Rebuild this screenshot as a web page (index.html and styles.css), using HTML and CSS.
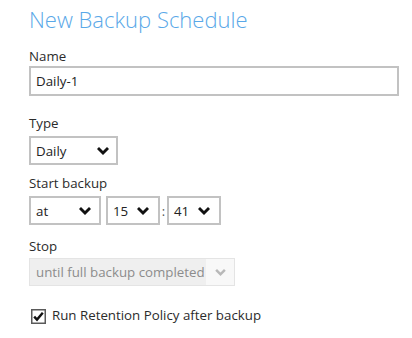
FILE: index.html
```html
<!DOCTYPE html>
<html>
<head>
<meta charset="utf-8">
<link rel="stylesheet" href="styles.css">
</head>
<body>
<div class="form">
  <h1 class="title">New Backup Schedule</h1>

  <div class="label label-name">Name</div>
  <div class="input">Daily-1</div>

  <div class="label label-type">Type</div>
  <div class="row">
    <div class="select sel-type"><span>Daily</span>
      <svg class="chev" width="12" height="8" viewBox="0 0 12 8"><path d="M0 2 L2 0 L6 4 L10 0 L12 2 L6 8 Z"/></svg>
    </div>
  </div>

  <div class="label label-start">Start backup</div>
  <div class="row time-row">
    <div class="select sel-at"><span>at</span>
      <svg class="chev" width="12" height="8" viewBox="0 0 12 8"><path d="M0 2 L2 0 L6 4 L10 0 L12 2 L6 8 Z"/></svg>
    </div>
    <div class="select sel-num"><span>15</span>
      <svg class="chev" width="12" height="8" viewBox="0 0 12 8"><path d="M0 2 L2 0 L6 4 L10 0 L12 2 L6 8 Z"/></svg>
    </div>
    <span class="colon">:</span>
    <div class="select sel-num"><span>41</span>
      <svg class="chev" width="12" height="8" viewBox="0 0 12 8"><path d="M0 2 L2 0 L6 4 L10 0 L12 2 L6 8 Z"/></svg>
    </div>
  </div>

  <div class="label label-stop">Stop</div>
  <div class="row">
    <div class="select-disabled">
      <span class="dis-text">until full backup completed</span>
      <span class="dis-arrow">
        <svg width="11" height="7" viewBox="0 0 12 8"><path d="M0 2 L2 0 L6 4 L10 0 L12 2 L6 8 Z"/></svg>
      </span>
    </div>
  </div>

  <div class="check-row">
    <svg class="checkbox" width="15" height="15" viewBox="0 0 15 15">
      <rect x="0.75" y="0.75" width="13.5" height="13.5" fill="#fff" stroke="#5a5a5a" stroke-width="1.5"/>
      <path d="M3.2 7.6 L6 10.6 L11.8 3.8" fill="none" stroke="#111" stroke-width="2.4"/>
    </svg>
    <span class="check-text">Run Retention Policy after backup</span>
  </div>
</div>
</body>
</html>
```

FILE: styles.css
```css
html, body {
  margin: 0;
  padding: 0;
  background: #ffffff;
}

body {
  font-family: "Open Sans", "Noto Sans", sans-serif;
  color: #2b2b2b;
}

.form {
  padding-left: 29px;
  padding-top: 4px;
  width: 370px;
}

.title {
  margin: 0;
  font-size: 22px;
  line-height: 30px;
  font-weight: 300;
  color: #5aa8e8;
}

.label {
  font-size: 13.3px;
  line-height: 19px;
  color: #2b2b2b;
}

.label-name { margin-top: 13px; }
.label-type { margin-top: 17px; line-height: 20px; }
.label-start { margin-top: 8px; line-height: 20px; }
.label-stop { margin-top: 11px; line-height: 20px; }

.input {
  box-sizing: border-box;
  height: 30px;
  width: 370px;
  border: 2px solid #c2c2c2;
  padding-left: 5px;
  font-size: 13.3px;
  line-height: 26px;
  color: #222;
}

.row {
  display: flex;
  align-items: center;
  margin-top: 3px;
}

.select {
  box-sizing: border-box;
  height: 29px;
  border: 2px solid #c2c2c2;
  display: flex;
  align-items: center;
  justify-content: space-between;
  padding: 0 7px 0 5px;
  font-size: 13.3px;
  color: #222;
}

.chev {
  fill: #111;
  display: block;
}

.sel-type { width: 89px; }
.sel-at { width: 72px; padding-right: 8px; }
.sel-num { width: 54px; padding-right: 9px; }

.time-row .sel-at { margin-right: 5px; }

.colon {
  width: 7px;
  text-align: center;
  font-size: 13px;
  color: #555;
  line-height: 20px;
}

.label-stop + .row { margin-top: 2px; }

.select-disabled {
  box-sizing: border-box;
  height: 28px;
  width: 206px;
  border: 1px solid #e4e4e4;
  background: #efefef;
  display: flex;
  align-items: stretch;
  font-size: 13.3px;
  color: #8c8c8c;
}

.dis-text {
  flex: 1;
  padding-left: 6px;
  line-height: 26px;
  white-space: nowrap;
}

.dis-arrow {
  width: 28px;
  flex: none;
  background: #f8f8f8;
  display: flex;
  align-items: center;
  justify-content: center;
}

.dis-arrow svg {
  fill: #b8b8b8;
  display: block;
}

.check-row {
  display: flex;
  align-items: center;
  margin-top: 19px;
  height: 20px;
  padding-left: 2px;
}

.checkbox {
  display: block;
  margin-right: 6px;
  margin-top: 3px;
}

.check-text {
  font-size: 13.3px;
  line-height: 20px;
  color: #2b2b2b;
}
```
